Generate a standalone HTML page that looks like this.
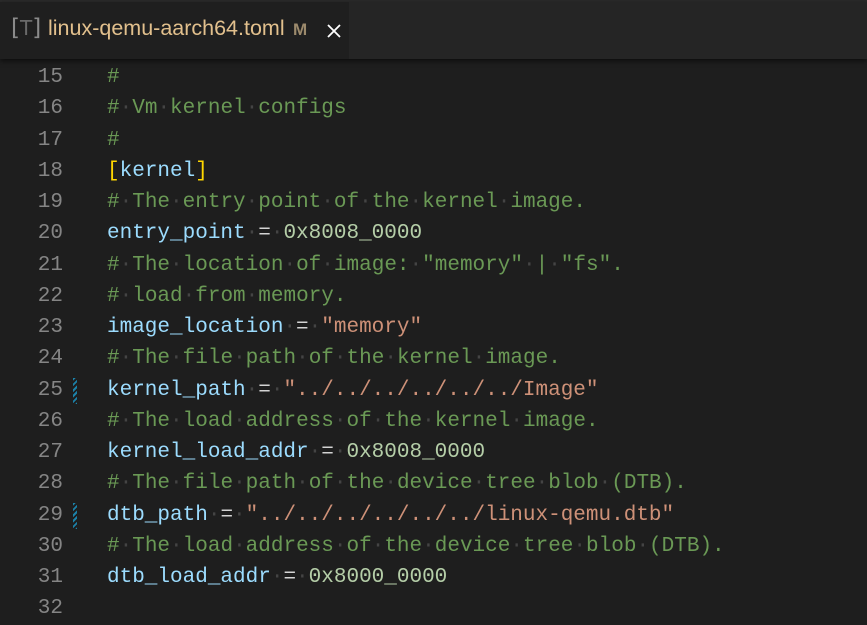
<!DOCTYPE html>
<html><head><meta charset="utf-8"><style>
*{margin:0;padding:0;box-sizing:border-box}
body{width:867px;height:603px;overflow:hidden;background:#1e1e1e;font-family:"Liberation Mono",monospace;position:relative}
.top{position:absolute;left:0;top:0;width:867px;height:2px;background:#2b2b2b}
.bar{position:absolute;left:0;top:2px;width:867px;height:57px;background:#252525;box-shadow:0 2px 5px rgba(0,0,0,.6);z-index:2}
.tab{position:absolute;left:0;top:0;width:349px;height:57px;background:#1f1f1f;font-family:"Liberation Sans",sans-serif}
.ic{position:absolute;left:11px;top:13px;font-size:23px;color:#8a8a8a;letter-spacing:0px;font-family:"DejaVu Sans",sans-serif}
.ic b{color:#6a6a6a;font-weight:normal;font-size:20px}
.nm{position:absolute;left:48px;top:14px;font-size:21.5px;color:#e2c08d}
.m{position:absolute;left:293px;top:18px;font-size:17px;font-weight:bold;color:#9c8a6c}
.x{position:absolute;left:326px;top:21px}
.code{position:absolute;left:0;top:62px;width:867px}
.l{height:31.25px;line-height:31.25px;font-size:21px;white-space:pre;position:relative}
.n{position:absolute;right:804px;color:#858585}
.t{position:absolute;left:107px}
.d{color:#444}
.c{color:#6a9955}.k{color:#9cdcfe}.v{color:#b5cea8}.s{color:#ce9178}.y{color:#ffd700}.e{color:#d4d4d4}
.g{position:absolute;left:73px;top:3px;width:4px;height:26px;background:repeating-linear-gradient(135deg,#1b81a8 0 2px,#1e1e1e 2px 4px)}
</style></head><body>
<div class="top"></div>
<div class="bar"><div class="tab">
<div class="ic">[<b>T</b>]</div>
<div class="nm">linux-qemu-aarch64.toml</div>
<div class="m">M</div>
<svg class="x" width="16" height="16" viewBox="0 0 16 16"><path d="M2 2L14 14M14 2L2 14" stroke="#fff" stroke-width="1.8"/></svg>
</div></div>
<div class="code">
<div class="l"><span class="n">15</span><span class="t c">#</span></div>
<div class="l"><span class="n">16</span><span class="t c">#<span class="d">·</span>Vm<span class="d">·</span>kernel<span class="d">·</span>configs</span></div>
<div class="l"><span class="n">17</span><span class="t c">#</span></div>
<div class="l"><span class="n">18</span><span class="t"><span class="y">[</span><span class="k">kernel</span><span class="y">]</span></span></div>
<div class="l"><span class="n">19</span><span class="t c">#<span class="d">·</span>The<span class="d">·</span>entry<span class="d">·</span>point<span class="d">·</span>of<span class="d">·</span>the<span class="d">·</span>kernel<span class="d">·</span>image.</span></div>
<div class="l"><span class="n">20</span><span class="t"><span class="k">entry_point</span><span class="d">·</span><span class="e">=</span><span class="d">·</span><span class="v">0x8008_0000</span></span></div>
<div class="l"><span class="n">21</span><span class="t c">#<span class="d">·</span>The<span class="d">·</span>location<span class="d">·</span>of<span class="d">·</span>image:<span class="d">·</span>"memory"<span class="d">·</span>|<span class="d">·</span>"fs".</span></div>
<div class="l"><span class="n">22</span><span class="t c">#<span class="d">·</span>load<span class="d">·</span>from<span class="d">·</span>memory.</span></div>
<div class="l"><span class="n">23</span><span class="t"><span class="k">image_location</span><span class="d">·</span><span class="e">=</span><span class="d">·</span><span class="s">"memory"</span></span></div>
<div class="l"><span class="n">24</span><span class="t c">#<span class="d">·</span>The<span class="d">·</span>file<span class="d">·</span>path<span class="d">·</span>of<span class="d">·</span>the<span class="d">·</span>kernel<span class="d">·</span>image.</span></div>
<div class="l"><span class="n">25</span><span class="g"></span><span class="t"><span class="k">kernel_path</span><span class="d">·</span><span class="e">=</span><span class="d">·</span><span class="s">"../../../../../../Image"</span></span></div>
<div class="l"><span class="n">26</span><span class="t c">#<span class="d">·</span>The<span class="d">·</span>load<span class="d">·</span>address<span class="d">·</span>of<span class="d">·</span>the<span class="d">·</span>kernel<span class="d">·</span>image.</span></div>
<div class="l"><span class="n">27</span><span class="t"><span class="k">kernel_load_addr</span><span class="d">·</span><span class="e">=</span><span class="d">·</span><span class="v">0x8008_0000</span></span></div>
<div class="l"><span class="n">28</span><span class="t c">#<span class="d">·</span>The<span class="d">·</span>file<span class="d">·</span>path<span class="d">·</span>of<span class="d">·</span>the<span class="d">·</span>device<span class="d">·</span>tree<span class="d">·</span>blob<span class="d">·</span>(DTB).</span></div>
<div class="l"><span class="n">29</span><span class="g"></span><span class="t"><span class="k">dtb_path</span><span class="d">·</span><span class="e">=</span><span class="d">·</span><span class="s">"../../../../../../linux-qemu.dtb"</span></span></div>
<div class="l"><span class="n">30</span><span class="t c">#<span class="d">·</span>The<span class="d">·</span>load<span class="d">·</span>address<span class="d">·</span>of<span class="d">·</span>the<span class="d">·</span>device<span class="d">·</span>tree<span class="d">·</span>blob<span class="d">·</span>(DTB).</span></div>
<div class="l"><span class="n">31</span><span class="t"><span class="k">dtb_load_addr</span><span class="d">·</span><span class="e">=</span><span class="d">·</span><span class="v">0x8000_0000</span></span></div>
<div class="l"><span class="n">32</span><span class="t"></span></div>
</div>
</body></html>
